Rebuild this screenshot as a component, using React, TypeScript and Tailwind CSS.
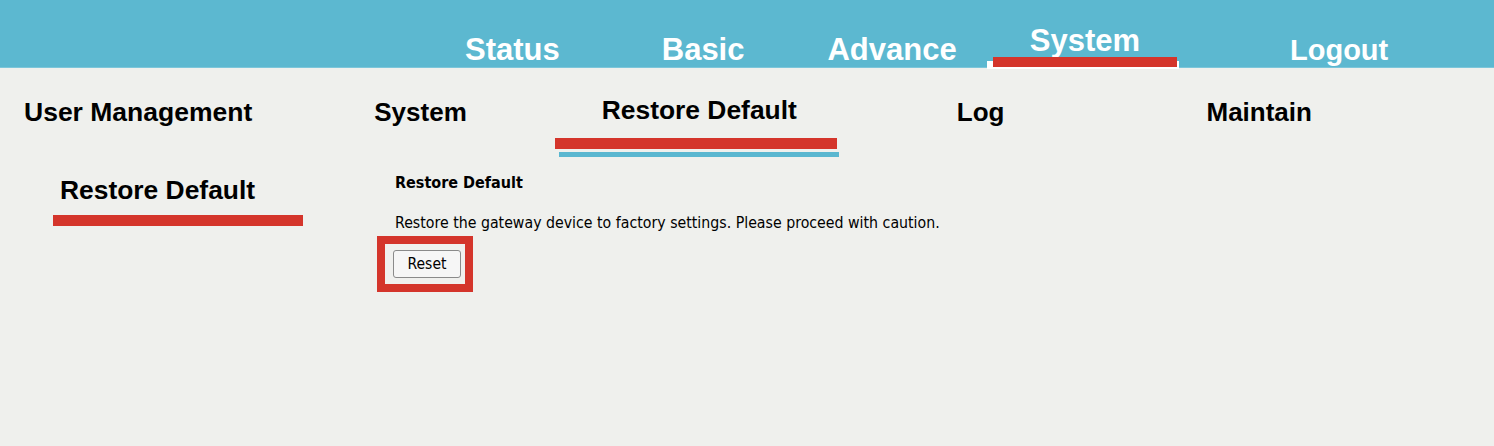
import React from "react";

const hdr = "font-['Liberation_Sans',Arial,sans-serif] font-bold";

export default function App() {
  return (
    <div className="w-[1494px] h-[446px] bg-[#eff0ed] overflow-hidden font-['Liberation_Sans',Arial,sans-serif]">
      {/* Top bar */}
      <div className="h-[68px] bg-[#5cb8d0] border-b border-[#7cc6da] flex items-end text-white">
        <span className={`${hdr} ml-[465px] mb-[2px] text-[31px] leading-[31px]`}>Status</span>
        <span className={`${hdr} ml-[102px] mb-[2px] text-[31px] leading-[31px]`}>Basic</span>
        <span className={`${hdr} ml-[83px] mb-[2px] text-[31px] leading-[31px]`}>Advance</span>
        <span className={`${hdr} relative ml-[73px] mb-[11px] text-[31px] leading-[31px]`}>
          System
          <span className="absolute left-[-43px] top-[36px] w-[192px] h-[8px] bg-white" />
          <span className="absolute left-[-37px] top-[32px] w-[184px] h-[10px] bg-[#d4352b]" />
        </span>
        <span className={`${hdr} ml-[150px] mb-[2px] text-[29px] leading-[29px]`}>Logout</span>
      </div>

      {/* Sub navigation */}
      <div className="h-[89px] flex items-start text-black">
        <span className={`${hdr} ml-[24px] mt-[31px] text-[26.5px] leading-[26px]`}>User Management</span>
        <span className={`${hdr} ml-[122px] mt-[31px] text-[26px] leading-[26px]`}>System</span>
        <span className={`${hdr} relative ml-[135px] mt-[29px] text-[26.4px] leading-[26px]`}>
          Restore Default
          <span className="absolute left-[-47px] top-[41px] w-[282px] h-[11px] bg-[#d4352b]" />
          <span className="absolute left-[-43px] top-[55px] w-[280px] h-[5px] bg-[#5ab7d0]" />
        </span>
        <span className={`${hdr} ml-[160px] mt-[31px] text-[26px] leading-[26px]`}>Log</span>
        <span className={`${hdr} ml-[202px] mt-[31px] text-[26px] leading-[26px]`}>Maintain</span>
      </div>

      {/* Main */}
      <div className="flex">
        <div className="w-[395px] pl-[60px] pt-[20px]">
          <span className={`${hdr} relative inline-block text-[26.4px] leading-[26px] text-black`}>
            Restore Default
            <span className="absolute left-[-7px] top-[38px] w-[250px] h-[11px] bg-[#d4352b]" />
          </span>
        </div>
        <div className="pt-[17px] font-['DejaVu_Sans_Condensed','DejaVu_Sans',sans-serif] text-black">
          <div className="font-bold text-[16px] leading-[18px]">Restore Default</div>
          <div className="mt-[22px] text-[15.75px] leading-[18px]">
            Restore the gateway device to factory settings. Please proceed with caution.
          </div>
          <div className="mt-[4px] -ml-[18px] w-[96px] h-[56px] bg-[#d4352b] p-[8px]">
            <div className="w-full h-full bg-[#f0f0ee] pl-[8px] pt-[6px]">
              <button className="w-[68px] h-[28px] rounded-[3px] border border-[#8a8a8a] bg-[#f6f6f6] text-[15.5px] leading-[18px] text-black font-['DejaVu_Sans_Condensed','DejaVu_Sans',sans-serif]">
                Reset
              </button>
            </div>
          </div>
        </div>
      </div>
    </div>
  );
}
